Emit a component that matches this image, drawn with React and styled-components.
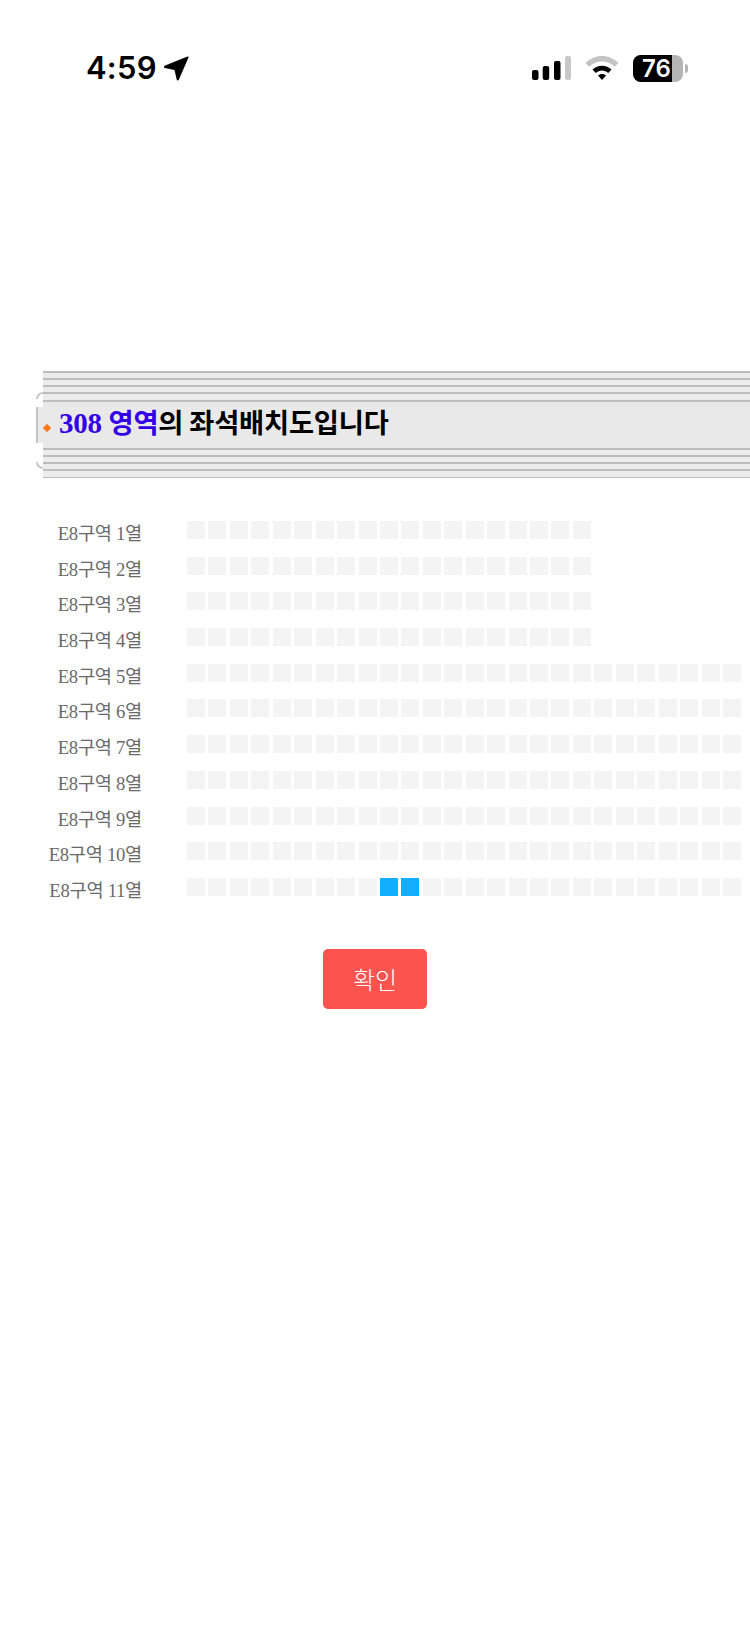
import React from "react";
import styled, { createGlobalStyle } from "styled-components";

const Global = createGlobalStyle`
  html, body { margin: 0; padding: 0; background: #fff; }
  body { width: 750px; height: 1629px; overflow: hidden; }
`;

const Page = styled.div`
  width: 750px;
  height: 1629px;
  display: flex;
  flex-direction: column;
  background: #fff;
`;

const StatusBar = styled.div`
  height: 100px;
  box-sizing: border-box;
  padding: 46px 62px 0 86px;
  display: flex;
  align-items: flex-start;
  justify-content: space-between;
`;

const TimeGroup = styled.div`
  display: flex;
  align-items: center;
  gap: 6px;
`;

const Time = styled.span`
  font: 600 31px/44px Inter, "Liberation Sans", sans-serif;
  color: #000;
  letter-spacing: 0.2px;
`;

const StatusIcons = styled.div`
  display: flex;
  align-items: center;
  gap: 14px;
  height: 44px;
`;

const Battery = styled.div`
  position: relative;
  width: 50px;
  height: 27px;
  border-radius: 8px;
  background: #b4b4b4;
  display: flex;
  align-items: center;
  justify-content: center;
`;

const BatteryFill = styled.div`
  position: absolute;
  left: 0;
  top: 0;
  bottom: 0;
  width: 39px;
  border-radius: 8px 0 0 8px;
  background: #000;
`;

const BatteryText = styled.span`
  position: relative;
  font: 600 24px/27px Inter, "Liberation Sans", sans-serif;
  color: #fff;
  margin-right: 3px;
`;

const BatteryGroup = styled.div`
  display: flex;
  align-items: center;
  gap: 2px;
`;

const BatteryCap = styled.div`
  width: 3px;
  height: 9px;
  border-radius: 0 3px 3px 0;
  background: #b4b4b4;
`;

const Header = styled.div`
  position: relative;
  margin: 271px 0 0 43px;
  display: flex;
  flex-direction: column;
`;

const Stripes = styled.div`
  height: ${(p) => p.$h}px;
  background: repeating-linear-gradient(
    to bottom,
    #bdbdbd 0,
    #bdbdbd 2px,
    #ececec 2px,
    #ececec 7.15px
  );
`;

const TitleBand = styled.div`
  height: 46px;
  box-sizing: border-box;
  padding: 0 0 5px 16px;
  background: #e9e9e9;
  display: flex;
  align-items: center;
`;

const Title = styled.h1`
  margin: 0;
  font: 700 27.3px/41px "Noto Sans CJK KR", sans-serif;
  color: #000;
  letter-spacing: -0.2px;
`;

const Blue = styled.span`
  font-family: "Liberation Serif", "Noto Sans CJK KR", serif;
  color: #3300e6;
`;

const Digits = styled.span`
  font-size: 29px;
`;

const Diamond = styled.span`
  position: absolute;
  left: 1px;
  top: 54px;
  width: 6px;
  height: 6px;
  background: #ff7a1a;
  transform: rotate(45deg);
`;

const CapTop = styled.span`
  position: absolute;
  left: -7px;
  top: 21px;
  width: 7px;
  height: 7px;
  border-left: 2px solid #c8c8c8;
  border-top: 2px solid #c8c8c8;
  border-top-left-radius: 7px;
  box-sizing: border-box;
`;

const CapBottom = styled.span`
  position: absolute;
  left: -7px;
  top: 91px;
  width: 7px;
  height: 7px;
  border-left: 2px solid #c8c8c8;
  border-bottom: 2px solid #c8c8c8;
  border-bottom-left-radius: 7px;
  box-sizing: border-box;
`;

const CapBar = styled.span`
  position: absolute;
  left: -7px;
  top: 36px;
  width: 7px;
  height: 36px;
  box-sizing: border-box;
  border-left: 2px solid #c4c4c4;
  background: #e9e9e9;
`;

const Grid = styled.div`
  margin-top: 43px;
  display: flex;
  flex-direction: column;
  gap: 17.7px;
`;

const Row = styled.div`
  display: flex;
  align-items: center;
  height: 18px;
`;

const RowLabel = styled.div`
  width: 142px;
  flex: none;
  box-sizing: border-box;
  padding-top: 8px;
  text-align: right;
  font: 400 18.7px/24px "Liberation Serif", "Noto Sans CJK KR", serif;
  color: #6a6a6a;
  letter-spacing: -0.3px;
`;

const Seats = styled.div`
  margin-left: 45px;
  display: flex;
  gap: 3.44px;
`;

const Seat = styled.div`
  width: 18px;
  height: 18px;
  flex: none;
  background: ${(p) => (p.$on ? "#14aeff" : "#f4f4f4")};
`;

const Actions = styled.div`
  margin-top: 53px;
  display: flex;
  justify-content: center;
`;

const Confirm = styled.button`
  width: 104px;
  height: 60px;
  border: 0;
  padding: 0;
  border-radius: 5px;
  background: #fb544f;
  color: #fff;
  font: 300 24px/60px "Noto Sans CJK KR", sans-serif;
`;

const rows = [19, 19, 19, 19, 26, 26, 26, 26, 26, 26, 26];

const Signal = () => (
  <svg width="39" height="24" viewBox="0 0 39 24">
    <rect x="0" y="14" width="6.500" height="10" rx="2" fill="#000" />
    <rect x="10.700" y="10" width="6.500" height="14" rx="2" fill="#000" />
    <rect x="22" y="5" width="6.500" height="19" rx="2" fill="#000" />
    <rect x="33" y="0" width="6" height="24" rx="2" fill="#c8c8c8" />
  </svg>
);

const Wifi = () => (
  <svg width="34" height="25" viewBox="1.500 0 33 25">
    <path d="M18 5.500c-5 0-9.400 2-12.700 5.200L1.500 7C5.800 2.700 11.600 0 18 0s12.200 2.700 16.500 7l-3.800 3.700C27.400 7.500 23 5.500 18 5.500z" fill="#c4c4c4" />
    <path d="M18 9.800c3.700 0 7 1.400 9.500 3.800l-3.300 3.300c-1.700-1.500-3.800-2.400-6.200-2.400s-4.500.9-6.200 2.400l-3.300-3.300c2.500-2.400 5.800-3.800 9.500-3.800z" fill="#000" />
    <path d="M18 18c1.600 0 3 .6 4 1.600L18 24l-4-4.400c1-1 2.400-1.600 4-1.600z" fill="#000" />
  </svg>
);

const Arrow = () => (
  <svg width="26" height="26" viewBox="0 0 26 26">
    <path d="M24.500 1.500c.7-.3 1.300.3 1 1L15.800 24.700c-.5 1-1.900.9-2.100-.2L11.500 15 1.800 12.900c-1.100-.2-1.200-1.700-.2-2.100z" fill="#000" />
  </svg>
);

export default function App() {
  return (
    <Page>
      <Global />
      <StatusBar>
        <TimeGroup>
          <Time>4:59</Time>
          <Arrow />
        </TimeGroup>
        <StatusIcons>
          <Signal />
          <Wifi />
          <BatteryGroup>
            <Battery>
              <BatteryFill />
              <BatteryText>76</BatteryText>
            </Battery>
            <BatteryCap />
          </BatteryGroup>
        </StatusIcons>
      </StatusBar>
      <Header>
        <Stripes $h={31} />
        <TitleBand>
          <Title>
            <Blue>
              <Digits>308</Digits> 영역
            </Blue>
            의 좌석배치도입니다
          </Title>
        </TitleBand>
        <Stripes $h={30} />
        <CapTop />
        <CapBar />
        <CapBottom />
        <Diamond />
      </Header>
      <Grid>
        {rows.map((count, r) => (
          <Row key={r}>
            <RowLabel>E8구역 {r + 1}열</RowLabel>
            <Seats>
              {Array.from({ length: count }, (_, i) => (
                <Seat key={i} $on={r === 10 && (i === 9 || i === 10)} />
              ))}
            </Seats>
          </Row>
        ))}
      </Grid>
      <Actions>
        <Confirm>확인</Confirm>
      </Actions>
    </Page>
  );
}
